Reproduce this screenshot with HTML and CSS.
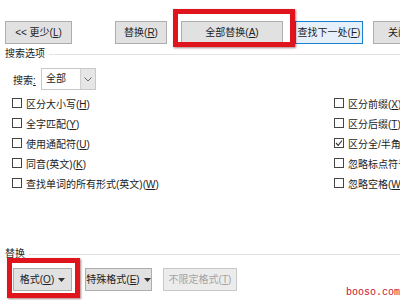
FILE: index.html
```html
<!DOCTYPE html>
<html lang="zh-CN">
<head>
    <meta charset="UTF-8">
    <title>查找和替换</title>
    <link rel="stylesheet" href="styles.css">
</head>
<body>
    <div class="dialog">
        <div class="toolbar">
            <button class="btn btn-less">&lt;&lt; 更少(<u>L</u>)</button>
            <button class="btn btn-replace">替换(<u>R</u>)</button>
            <button class="btn btn-all">全部替换(<u>A</u>)</button>
            <button class="btn btn-find">查找下一处(<u>F</u>)</button>
            <button class="btn btn-close">关闭</button>
        </div>

        <div class="group-title">搜索选项</div>

        <div class="search-row">
            <span class="search-label">搜索<u>:</u></span>
            <div class="select">
                <span class="select-value">全部</span>
                <span class="select-arrow">
                    <svg width="8" height="5" viewBox="0 0 8 5"><path d="M0.5 0.5 L4 4 L7.5 0.5" fill="none" stroke="#666" stroke-width="1"/></svg>
                </span>
            </div>
        </div>

        <div class="options">
            <div class="col">
                <label class="check"><span class="box"></span><span>区分大小写(<u>H</u>)</span></label>
                <label class="check"><span class="box"></span><span>全字匹配(<u>Y</u>)</span></label>
                <label class="check"><span class="box"></span><span>使用通配符(<u>U</u>)</span></label>
                <label class="check"><span class="box"></span><span>同音(英文)(<u>K</u>)</span></label>
                <label class="check"><span class="box"></span><span>查找单词的所有形式(英文)(<u>W</u>)</span></label>
            </div>
            <div class="col col-right">
                <label class="check"><span class="box"></span><span>区分前缀(<u>X</u>)</span></label>
                <label class="check"><span class="box"></span><span>区分后缀(<u>T</u>)</span></label>
                <label class="check"><span class="box checked">
                    <svg width="8" height="8" viewBox="0 0 8 8"><path d="M1 4 L3.2 6.3 L7 1.5" fill="none" stroke="#333" stroke-width="1.1"/></svg>
                </span><span>区分全/半角(<u>M</u>)</span></label>
                <label class="check"><span class="box"></span><span>忽略标点符号(<u>S</u>)</span></label>
                <label class="check"><span class="box"></span><span>忽略空格(<u>W</u>)</span></label>
            </div>
        </div>

        <div class="group-title group-replace">替换</div>

        <div class="toolbar toolbar-bottom">
            <button class="btn btn-format">格式(<u>O</u>)<svg class="caret" width="7" height="4" viewBox="0 0 7 4"><path d="M0 0 H7 L3.5 4 Z" fill="#333"/></svg></button>
            <button class="btn btn-special">特殊格式(<u>E</u>)<svg class="caret" width="7" height="4" viewBox="0 0 7 4"><path d="M0 0 H7 L3.5 4 Z" fill="#333"/></svg></button>
            <button class="btn btn-noformat" disabled>不限定格式(<u>T</u>)</button>
        </div>
    </div>

    <!-- annotation boxes -->
    <div class="mark mark-all"></div>
    <div class="mark mark-format"></div>
    <div class="watermark">booso.com</div>
</body>
</html>
```

FILE: styles.css
```css
body {
    font-family: "Liberation Sans", "Noto Sans CJK SC", sans-serif;
    font-size: 10px;
    color: #222;
    background-color: #fff;
    margin: 0;
    width: 400px;
    height: 300px;
    overflow: hidden;
    position: relative;
}

u {
    text-decoration: underline;
    text-underline-offset: 1px;
}

.toolbar {
    display: flex;
    padding: 21px 0 0 5px;
    white-space: nowrap;
}

.btn {
    flex: none;
    height: 23px;
    padding: 0;
    background-color: #e1e1e1;
    border: 1px solid #adadad;
    font-family: inherit;
    font-size: 10px;
    color: #222;
    line-height: 21px;
}

.btn-less { width: 67px; }
.btn-replace { width: 52px; margin-left: 43px; }
.btn-all { width: 102px; margin-left: 14px; }
.btn-find {
    width: 68px;
    margin-left: 12px;
    border-color: #1a7fd0;
    background-color: #e5f0fa;
}
.btn-close { width: 80px; margin-left: 10px; text-align: left; padding-left: 14px; }

.caret {
    margin-left: 4px;
    vertical-align: 1px;
}

.group-title {
    display: flex;
    align-items: center;
    gap: 4px;
    margin: 4px 0 0 5px;
    height: 12px;
    line-height: 12px;
}

.group-title::after {
    content: "";
    flex: 1;
    border-top: 1px solid #e3e3e3;
}

.search-row {
    display: flex;
    align-items: center;
    margin: 8px 0 0 13px;
    height: 22px;
}

.search-label {
    width: 28px;
}

.select {
    display: flex;
    width: 55px;
    height: 22px;
    box-sizing: border-box;
    border: 1px solid #c9c9c9;
}

.select-value {
    flex: 1;
    padding-left: 4px;
    line-height: 20px;
}

.select-arrow {
    width: 14px;
    background-color: #e6e6e6;
    border-left: 1px solid #d0d0d0;
    display: flex;
    align-items: center;
    justify-content: center;
}

.options {
    display: flex;
    justify-content: space-between;
    margin-top: 3px;
    padding-left: 12px;
}

.col {
    display: flex;
    flex-direction: column;
}

.col-right {
    width: 66px;
    overflow: hidden;
    white-space: nowrap;
}

.check {
    display: flex;
    align-items: center;
    height: 20px;
    gap: 4px;
    white-space: nowrap;
}

.box {
    flex: none;
    width: 10px;
    height: 10px;
    box-sizing: border-box;
    border: 1px solid #444;
    background-color: #fff;
    display: flex;
    align-items: center;
    justify-content: center;
}

.group-replace {
    margin-top: 55px;
}

.toolbar-bottom {
    padding: 8px 0 0 13px;
}

.btn-format { width: 59px; }
.btn-special { width: 67px; margin-left: 13px; }
.btn-noformat {
    width: 74px;
    margin-left: 11px;
    color: #a3a3a3;
    background-color: #ececec;
    border-color: #c8c8c8;
}

.mark {
    position: absolute;
    border: 5px solid #e0141c;
    box-shadow: 1px 1px 2px rgba(80, 0, 0, 0.5);
}

.mark-all {
    left: 173px;
    top: 9px;
    width: 112px;
    height: 28px;
}

.mark-format {
    left: 7px;
    top: 258px;
    width: 63px;
    height: 30px;
}

.watermark {
    position: absolute;
    right: 0;
    bottom: 2px;
    font-family: "Liberation Mono", monospace;
    font-size: 10px;
    color: #c8102e;
}
```
